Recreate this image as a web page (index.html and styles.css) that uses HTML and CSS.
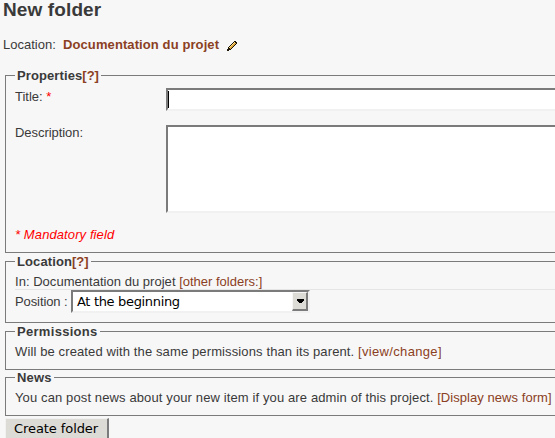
FILE: index.html
```html
<!DOCTYPE html>
<html lang="en">
<head>
<meta charset="utf-8">
<title>New folder</title>
<link rel="stylesheet" href="styles.css">
</head>
<body>
<h1>New folder</h1>
<p class="crumb"><span class="crumb-label">Location:</span><a class="crumb-link">Documentation du projet</a><svg class="pencil" width="10" height="10" viewBox="0 0 10 10" shape-rendering="crispEdges"><path d="M7 0h2v1h1v2h-1v1h-1v1h-1v1h-1v1h-1v1h-1v1h-2v1h-2v-2h1v-2h1v-1h1v-1h1v-1h1v-1h1v-1h1z" fill="#1c1508"/><path d="M7 1h1v1h1v1h-1v1h-1v1h-1v1h-1v1h-1v1h-1v-1h-1v-1h1v-1h1v-1h1v-1h1v-1h1v-1h1z" fill="#dca63c"/><path d="M7 1h1v1h-1v1h-1v1h-1v1h-1v1h-1v1h-1v-1h1v-1h1v-1h1v-1h1v-1h1z" fill="#ffe08a"/></svg></p>
<form>
<fieldset class="properties">
<legend><span class="lg-prop">Properties</span><a>[?]</a></legend>
<div class="field field-title"><label>Title: <span class="required">*</span></label><div class="input"><i class="caret"></i></div></div>
<div class="field field-desc"><label class="lb-desc">Description:</label><div class="input"></div></div>
<p class="mandatory">* Mandatory field</p>
</fieldset>
<fieldset class="location">
<legend><span class="lg-prop">Location</span><a>[?]</a></legend>
<div class="row parent"><span class="in">In: Documentation du projet</span> <a>[other folders:]</a></div>
<div class="position"><label>Position :</label><div class="select"><span>At the beginning</span><div class="drop"><svg width="8" height="4" viewBox="0 0 8 4" shape-rendering="crispEdges"><path d="M0 0h7v2h-1v1h-1v1h-3v-1h-1v-1h-1z" fill="#000"/></svg></div></div></div>
</fieldset>
<fieldset class="permissions">
<legend><span class="lg-perm">Permissions</span></legend>
<div class="row"><span class="perm">Will be created with the same permissions than its parent.</span> <a class="change">[view/change]</a></div>
</fieldset>
<fieldset class="news">
<legend><span class="lg-news">News</span></legend>
<div class="row"><span class="post">You can post news about your new item if you are admin of this project.</span> <a class="display">[Display news form]</a></div>
</fieldset>
<div class="submit">Create folder</div>
</form>
</body>
</html>
```
FILE: styles.css
```css
* { box-sizing: border-box; }
html, body { margin: 0; height: 438px; overflow: hidden; background: #f7f7f7; }
body { font: 13px/15px "Liberation Sans", Arial, sans-serif; color: #3a3a3a; white-space: nowrap; }
h1 { margin: 0 0 0 3px; height: 37px; font-size: 19px; line-height: 19px; letter-spacing: .12px; }
p { margin: 0; }
a { color: #8b4023; }
.crumb { display: flex; height: 32px; padding-left: 3px; }
.crumb-label { width: 60px; }
.crumb-link { width: 164px; font-weight: bold; letter-spacing: .1px; }
.pencil { margin-top: 4px; }
fieldset {
  min-width: 0; margin: 0 0 0 5px; padding: 1px 0 0 9px;
  border: 1px solid #7b7b7b; border-right: 0;
}
legend { height: 13px; line-height: 14px; padding: 0 2px; font-weight: bold; }
.properties { height: 184px; margin-bottom: 2px; }
.location { height: 68px; margin-bottom: 2px; }
.permissions, .news { height: 45px; margin-bottom: 1px; }
.lg-prop { letter-spacing: .1px; }
.lg-perm { letter-spacing: .3px; }
.lg-news { letter-spacing: .2px; }
.field { display: flex; }
.field label { width: 151px; flex: none; }
.input { flex: 1; background: #fff; border: 2px solid; border-color: #7b7b7b #f1f1f1 #f1f1f1 #7b7b7b; border-right: 0; }
.field-title { padding-top: 5px; height: 42px; }
.field-title label { padding-top: 1px; }
.field-title .input { height: 23px; padding: 1px 0; }
.caret { display: block; width: 1px; height: 17px; background: #000; }
.required { color: red; }
.lb-desc { letter-spacing: -.05px; }
.field-desc { height: 102px; }
.field-desc .input { height: 88px; }
.mandatory { color: red; font-style: italic; letter-spacing: .1px; }
.parent { height: 21px; padding-top: 5px; border-bottom: 1px solid #e5e5e5; }
.in { letter-spacing: .03px; }
.position { display: flex; }
.position label { width: 56px; padding-top: 4px; letter-spacing: -.1px; }
.select {
  display: flex; justify-content: space-between; width: 239px; height: 23px; background: #fff;
  border: 2px solid; border-color: #7b7b7b #f1f1f1 #f1f1f1 #7b7b7b;
  color: #000; font: 13px/19px "DejaVu Sans", sans-serif; letter-spacing: -.33px; padding-left: 4px;
}
.drop { width: 16px; height: 19px; padding: 6px 0 0 4px; background: #dcdbd5; border: 1px solid #f7f7f7; border-right: 2px solid #7b7b7b; border-bottom: 2px solid #7b7b7b; }
.drop svg { display: block; }
.row { padding-top: 5px; }
.perm { letter-spacing: .12px; }
.change { letter-spacing: .34px; }
.post { letter-spacing: .12px; }
.display { letter-spacing: .06px; }
.submit {
  width: 104px; height: 20px; margin: 2px 0 0 5px; padding-left: 8px; background: #dcdbd5;
  border: 1px solid #f1f1f1; border-right: 2px solid #7b7b7b; border-bottom: 0;
  color: #000; font: 13px/19px "DejaVu Sans", sans-serif; letter-spacing: -.08px;
}
```
